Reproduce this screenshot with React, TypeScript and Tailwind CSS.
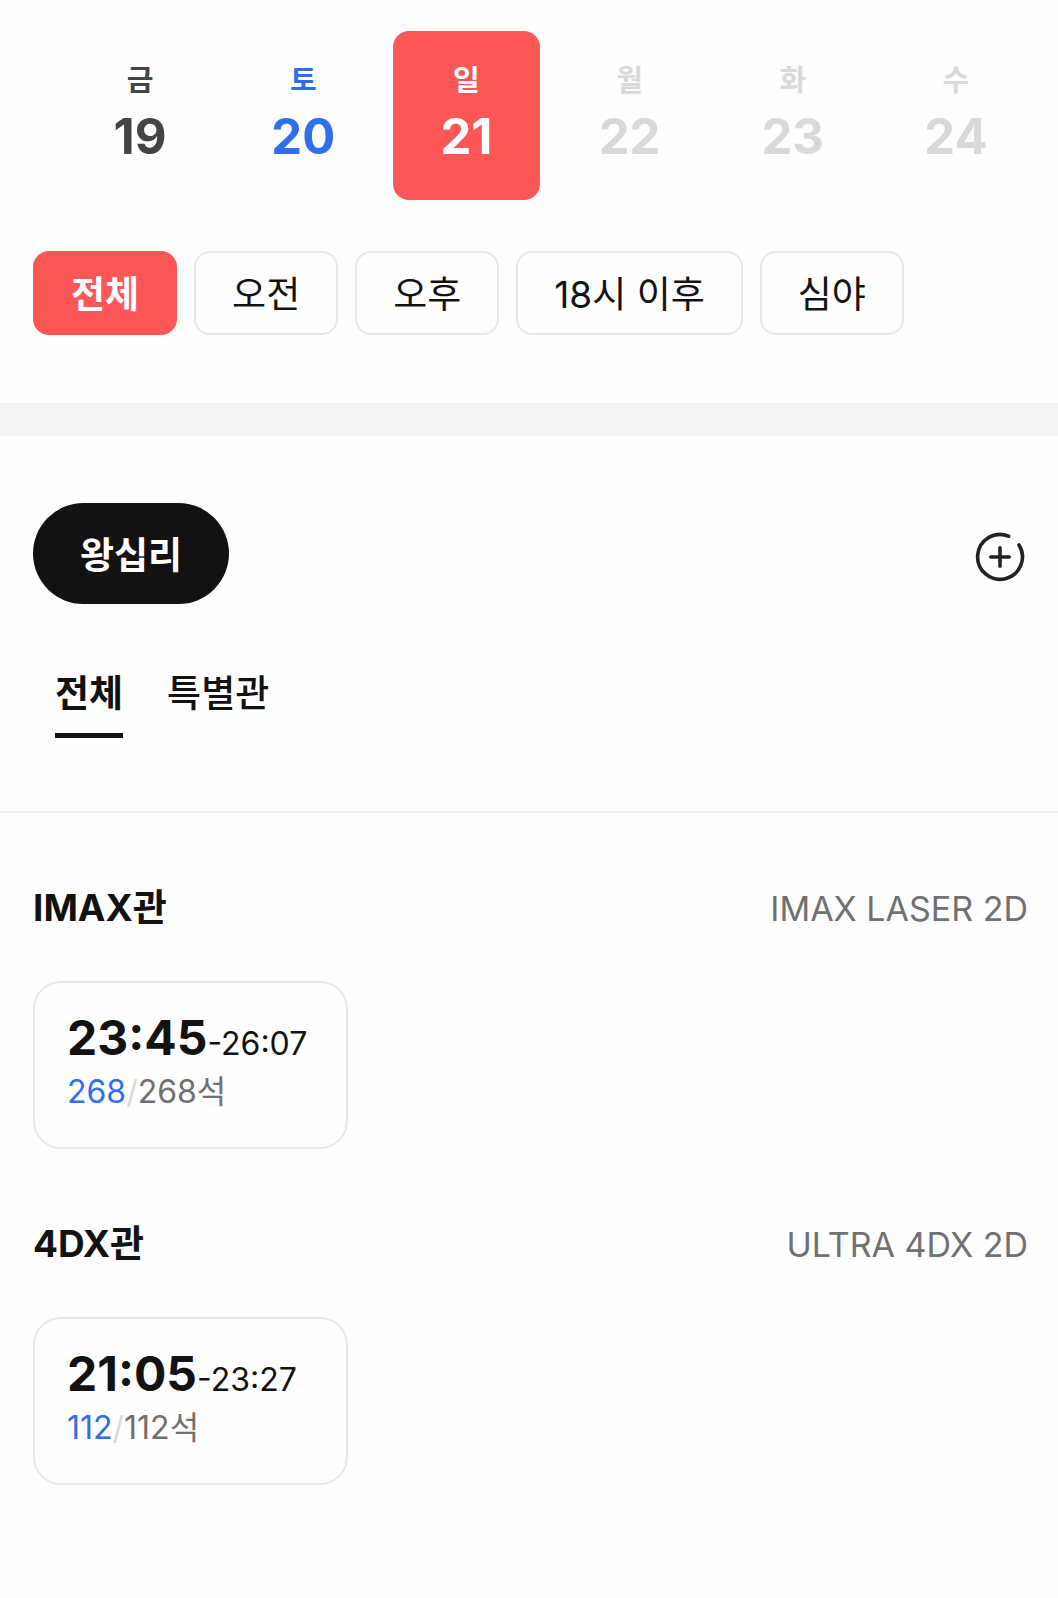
import { useState } from 'react';
import clsx from 'clsx';

const dates = [
  { day: '금', date: 19, color: 'text-[#444444]' },
  { day: '토', date: 20, color: 'text-[#2e6eef]' },
  { day: '일', date: 21, color: 'text-[#fc5656]' },
  { day: '월', date: 22, color: 'text-[#d9d9d9]', disabled: true },
  { day: '화', date: 23, color: 'text-[#d9d9d9]', disabled: true },
  { day: '수', date: 24, color: 'text-[#d9d9d9]', disabled: true },
];

const timeFilters = ['전체', '오전', '오후', '18시 이후', '심야'];

const hallTabs = ['전체', '특별관'];

const halls = [
  {
    name: 'IMAX관',
    format: 'IMAX LASER 2D',
    showtimes: [{ start: '23:45', end: '26:07', left: 268, total: 268 }],
  },
  {
    name: '4DX관',
    format: 'ULTRA 4DX 2D',
    showtimes: [{ start: '21:05', end: '23:27', left: 112, total: 112 }],
  },
];

function AddIcon() {
  return (
    <svg
      viewBox="0 0 50 50"
      className="size-[50px]"
      fill="none"
      stroke="currentColor"
      strokeWidth="3.6"
      strokeLinecap="round"
      aria-hidden="true"
    >
      <path d="M33.6 4.2A22.4 22.4 0 1 0 44 13" />
      <path d="M25 15.8v18.4M15.8 25h18.4" />
    </svg>
  );
}

export default function App() {
  const [selectedDate, setSelectedDate] = useState(21);
  const [timeFilter, setTimeFilter] = useState('전체');
  const [hallTab, setHallTab] = useState('전체');

  return (
    <main className="min-h-screen bg-[#fefefe] font-['Inter','Noto_Sans_CJK_KR',sans-serif] text-[#121212]">
      <section className="pt-[31px] pb-[68px]">
        <div className="grid grid-cols-6 gap-[17px] pr-[29px] pl-[67px]">
          {dates.map(({ day, date, color, disabled }) => (
            <button
              key={date}
              type="button"
              disabled={disabled}
              onClick={() => setSelectedDate(date)}
              className={clsx(
                'flex h-[169px] flex-col items-center rounded-2xl pt-[30px] font-bold',
                selectedDate === date ? 'bg-[#fc5656] text-white' : color
              )}
            >
              <span className="text-[29px] leading-10">{day}</span>
              <span className="text-[49px] leading-[72px]">{date}</span>
            </button>
          ))}
        </div>
        <div className="mt-[51px] flex gap-[17px] px-[33px]">
          {timeFilters.map((label) => (
            <button
              key={label}
              type="button"
              onClick={() => setTimeFilter(label)}
              className={clsx(
                'h-[84px] rounded-2xl border-2 px-9 pt-1 text-[37px] leading-[54px]',
                timeFilter === label
                  ? 'border-[#fc5656] bg-[#fc5656] font-bold text-white'
                  : 'border-[#e8e8e8]'
              )}
            >
              {label}
            </button>
          ))}
        </div>
      </section>

      <div className="h-[33px] bg-[#f3f3f3]" />

      <section className="border-b-2 border-[#f0f0f0] pt-[67px] pb-[73px]">
        <div className="flex items-center justify-between px-[33px]">
          <button
            type="button"
            className="h-[101px] rounded-full bg-[#121212] px-[47px] pt-1 text-[37px] leading-[54px] font-bold text-white"
          >
            왕십리
          </button>
          <button type="button" aria-label="극장 추가" className="mt-1.5 text-[#222222]">
            <AddIcon />
          </button>
        </div>
        <div className="mt-[60px] flex gap-11 px-[55px]">
          {hallTabs.map((label) => (
            <button
              key={label}
              type="button"
              onClick={() => setHallTab(label)}
              className={clsx(
                'h-[74px] border-b-[5px] pb-[9px] text-[37px] leading-[54px]',
                hallTab === label ? 'border-[#121212] font-bold' : 'border-transparent font-medium'
              )}
            >
              {label}
            </button>
          ))}
        </div>
      </section>

      <section className="flex flex-col gap-[67px] pt-[67px] pb-[113px]">
        {halls.map(({ name, format, showtimes }) => (
          <article key={name} className="pr-[30px] pl-[33px]">
            <div className="flex h-[56px] items-baseline justify-between leading-[56px]">
              <h2 className="text-[37px] font-bold">{name}</h2>
              <span className="text-[34px] text-[#707070]">{format}</span>
            </div>
            <div className="mt-[45px] flex flex-wrap gap-4">
              {showtimes.map(({ start, end, left, total }) => (
                <button
                  key={start}
                  type="button"
                  className="h-[168px] min-w-[315px] rounded-[28px] border-2 border-[#e8e8e8] px-8 pb-1.5 text-left"
                >
                  <div className="flex items-baseline leading-[54px]">
                    <span className="text-[48px] font-bold">{start}</span>
                    <span className="text-[32px]">-{end}</span>
                  </div>
                  <div className="text-[32px] leading-[42px] text-[#707070]">
                    <span className="text-[#2e6eef]">{left}</span>
                    <span className="text-[#d9d9d9]">/</span>
                    {total}석
                  </div>
                </button>
              ))}
            </div>
          </article>
        ))}
      </section>
    </main>
  );
}
